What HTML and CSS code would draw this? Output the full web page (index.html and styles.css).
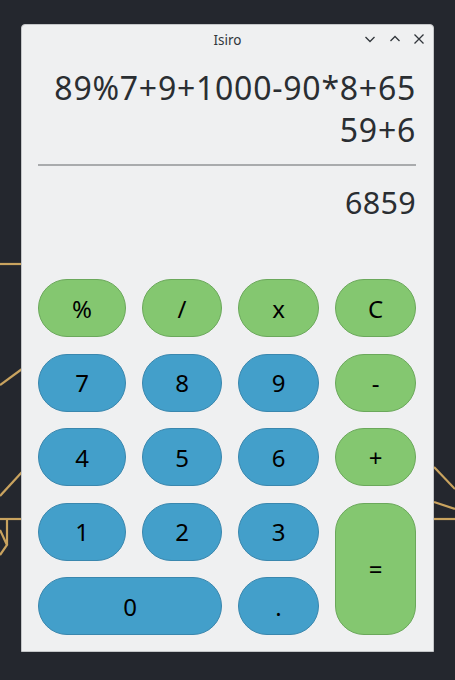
FILE: index.html
```html
<!DOCTYPE html>
<html>
<head>
<meta charset="utf-8">
<link rel="stylesheet" href="styles.css">
</head>
<body>
<svg class="deco" width="455" height="680" viewBox="0 0 455 680">
  <g stroke="#c9a35f" stroke-width="2.2" fill="none">
    <line x1="0" y1="264" x2="22" y2="264"/>
    <line x1="0" y1="385" x2="22" y2="369"/>
    <line x1="0" y1="496" x2="22" y2="472"/>
    <line x1="0" y1="519" x2="22" y2="519"/>
    <line x1="7" y1="519" x2="7" y2="545"/>
    <polyline points="0,530 7,545 0,555"/>
    <line x1="434" y1="467" x2="455" y2="489"/>
    <line x1="434" y1="502" x2="455" y2="509"/>
    <line x1="434" y1="519" x2="455" y2="519"/>
  </g>
</svg>
<div class="window">
  <div class="titlebar">
    <span class="title">Isiro</span>
    <div class="controls">
      <svg width="12" height="12" viewBox="0 0 12 12"><polyline points="1.5,4 6,8.5 10.5,4" fill="none" stroke="#31363b" stroke-width="1.3"/></svg>
      <svg width="12" height="12" viewBox="0 0 12 12"><polyline points="1.5,8 6,3.5 10.5,8" fill="none" stroke="#31363b" stroke-width="1.3"/></svg>
      <svg width="12" height="12" viewBox="0 0 12 12"><path d="M1.5,1.5 L10.5,10.5 M10.5,1.5 L1.5,10.5" fill="none" stroke="#31363b" stroke-width="1.3"/></svg>
    </div>
  </div>
  <div class="display">
    <div class="expr">89%7+9+1000-90*8+65<br>59+6</div>
    <div class="sep"></div>
    <div class="result">6859</div>
  </div>
  <div class="keys">
    <div class="key op">%</div>
    <div class="key op">/</div>
    <div class="key op">x</div>
    <div class="key op">C</div>
    <div class="key num">7</div>
    <div class="key num">8</div>
    <div class="key num">9</div>
    <div class="key op">-</div>
    <div class="key num">4</div>
    <div class="key num">5</div>
    <div class="key num">6</div>
    <div class="key op">+</div>
    <div class="key num">1</div>
    <div class="key num">2</div>
    <div class="key num">3</div>
    <div class="key op eq">=</div>
    <div class="key num zero">0</div>
    <div class="key num">.</div>
  </div>
</div>
</body>
</html>
```
FILE: styles.css
```css
html, body {
  margin: 0;
  padding: 0;
}
body {
  width: 455px;
  height: 680px;
  background: #24272e;
  position: relative;
  overflow: hidden;
  font-family: "Noto Sans", "Open Sans", sans-serif;
}
.deco {
  position: absolute;
  left: 0;
  top: 0;
}
.window {
  position: absolute;
  left: 21px;
  top: 24px;
  width: 413px;
  height: 628px;
  box-sizing: border-box;
  background: #eff0f1;
  border-radius: 4px 4px 0 0;
  border: 1px solid #c4c6c8;
  display: flex;
  flex-direction: column;
}
.titlebar {
  height: 29px;
  position: relative;
  display: flex;
  align-items: center;
  justify-content: center;
}
.title {
  font-size: 13.5px;
  color: #31363b;
  margin-top: 1px;
}
.controls {
  position: absolute;
  right: 8px;
  top: 8px;
  display: flex;
  gap: 12.5px;
}
.controls svg {
  display: block;
}
.display {
  padding: 12px 17px 0 16px;
  color: #2a2e32;
  text-align: right;
  font-size: 32px;
  line-height: 42px;
}
.expr {
  letter-spacing: 0.75px;
  margin-top: 1px;
}
.sep {
  height: 2px;
  background: #a9abad;
  margin-top: 13px;
}
.result {
  font-size: 30.5px;
  letter-spacing: 0.3px;
  margin-top: 14.5px;
}
.keys {
  margin-top: auto;
  padding: 0 17px 16px 16px;
  display: grid;
  grid-template-columns: 88px 80px 81px 81px;
  grid-template-rows: repeat(5, 58px);
  column-gap: 16px;
  row-gap: 16.5px;
}
.key {
  box-sizing: border-box;
  border-radius: 29px;
  display: flex;
  align-items: center;
  justify-content: center;
  font-size: 24px;
  color: #000;
}
.op {
  background: #84c770;
  border: 1.5px solid #6ba85b;
}
.num {
  background: #439fca;
  border: 1.5px solid #3a87ae;
}
.eq {
  grid-row: 4 / span 2;
  grid-column: 4;
}
.zero {
  grid-column: 1 / span 2;
}
```
